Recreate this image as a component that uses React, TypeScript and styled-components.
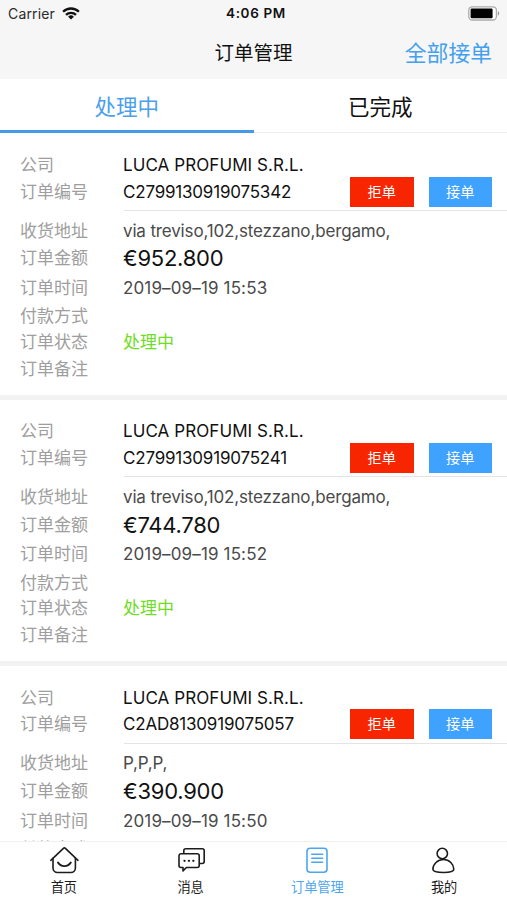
import React from 'react';
import styled, { createGlobalStyle } from 'styled-components';

const Global = createGlobalStyle`
  * { box-sizing: border-box; }
  body { margin: 0; background: #fff; }
`;

const Screen = styled.div`
  width: 507px;
  height: 900px;
  overflow: hidden;
  display: flex;
  flex-direction: column;
  background: #fff;
  color: #111;
  font-family: Inter, 'Noto Sans CJK SC', sans-serif;
  white-space: nowrap;
`;

const Header = styled.header`
  height: 79px;
  flex: none;
  background: #f6f6f6;
`;

const StatusBar = styled.div`
  height: 27px;
  padding: 0 7px 0 8px;
  display: grid;
  grid-template-columns: 1fr auto 1fr;
  align-items: center;
  font-size: 14px;
  line-height: 27px;
`;

const Carrier = styled.div`
  display: flex;
  align-items: center;
  gap: 7px;
  letter-spacing: 0.15px;
  color: #2a2a2a;
`;

const Clock = styled.div`
  font-size: 13.5px;
  font-weight: 600;
  letter-spacing: 0.65px;
  padding: 0 0 0 4px;
`;

const BatterySlot = styled.div`
  display: flex;
  justify-content: flex-end;
`;

const NavBar = styled.div`
  height: 52px;
  padding: 0 15px;
  display: grid;
  grid-template-columns: 1fr auto 1fr;
  align-items: center;
`;

const Title = styled.h1`
  grid-column: 2;
  margin: 0;
  font-size: 19.5px;
  line-height: 28px;
  font-weight: 400;
`;

const AcceptAll = styled.a`
  justify-self: end;
  font-size: 21.8px;
  line-height: 30px;
  color: #42a0ee;
`;

const Tabs = styled.nav`
  display: flex;
  flex: none;
  height: 54px;
`;

const Tab = styled.div<{ $active?: boolean }>`
  flex: 1;
  height: 54px;
  padding-top: 12px;
  text-align: center;
  font-size: 21.5px;
  line-height: 32px;
  color: ${(p) => (p.$active ? '#4aa0ec' : '#111')};
  border-bottom: ${(p) => (p.$active ? '3px solid #4499e8' : '1px solid #eee')};
`;

const List = styled.main`
  flex: 1;
  min-height: 0;
  overflow: hidden;
`;

const Card = styled.section`
  height: 266.3px;
  padding-top: 18px;
  border-bottom: 5px solid #f2f2f2;

  &:first-child {
    height: 267.1px;
    padding-top: 18.8px;
  }
`;

const Row = styled.div<{ $h?: number }>`
  display: flex;
  align-items: center;
  height: ${(p) => p.$h ?? 26.6}px;
  padding-left: 20px;
`;

const Label = styled.span`
  width: 103px;
  font-size: 17px;
  line-height: 26px;
  color: #9e9e9e;
`;

const Value = styled.span<{ $color?: string; $size?: number; $spacing?: number }>`
  font-size: ${(p) => p.$size ?? 17}px;
  letter-spacing: ${(p) => p.$spacing ?? 0}px;
  line-height: 26px;
  color: ${(p) => p.$color ?? '#4a4a4a'};
`;

const Actions = styled.div`
  display: flex;
  gap: 15px;
  margin-left: auto;
  margin-right: 15px;
`;

const Action = styled.button<{ $bg: string }>`
  width: 63.5px;
  height: 30px;
  padding: 0;
  border: 0;
  background: ${(p) => p.$bg};
  color: #fff;
  font-family: inherit;
  font-size: 14.2px;
  line-height: 30px;
`;

const Divider = styled.div`
  height: 1px;
  margin: 5px 0 6.6px 124px;
  background: #e4e4e4;
`;

const TabBar = styled.footer`
  flex: none;
  height: 59px;
  display: flex;
  border-top: 1px solid #f0f0f0;
  background: #fff;
`;

const TabItem = styled.div<{ $active?: boolean }>`
  flex: 1;
  display: flex;
  flex-direction: column;
  align-items: center;
  padding: 4px 0 0 1px;
  font-size: 13.2px;
  line-height: 20px;
  color: ${(p) => (p.$active ? '#4da5f0' : '#1c1c1c')};
`;

const TabIcon = styled.svg`
  display: block;
  width: 32px;
  height: 30px;
  margin-bottom: 1px;
  fill: none;
  stroke: currentColor;
  stroke-width: 1.6;
  stroke-linecap: round;
  stroke-linejoin: round;
`;

const Wifi = () => (
  <svg width="18" height="13" viewBox="0 0 18 13" fill="none" stroke="#111" strokeWidth="2.3">
    <path d="M1.1 4.7a11.3 11.3 0 0 1 15.8 0" />
    <path d="M4 7.9a7.1 7.1 0 0 1 10 0" />
    <path d="M9 12.6 6.1 9.7a4.2 4.2 0 0 1 5.8 0Z" fill="#111" stroke="none" />
  </svg>
);

const Battery = () => (
  <svg width="32" height="15" viewBox="0 0 32 15">
    <rect x="0.8" y="0.8" width="27.6" height="13.2" rx="3.5" fill="#fff" stroke="#aaa" strokeWidth="1.3" />
    <rect x="2.6" y="2.6" width="22" height="9.6" rx="1.2" fill="#000" />
    <path d="M29.9 5.2c1.7.6 1.7 3.8 0 4.4Z" fill="#999" />
  </svg>
);

interface Order {
  id: string;
  address: string;
  amount: string;
  time: string;
}

const orders: Order[] = [
  { id: 'C2799130919075342', address: 'via treviso,102,stezzano,bergamo,', amount: '€952.800', time: '2019–09–19 15:53' },
  { id: 'C2799130919075241', address: 'via treviso,102,stezzano,bergamo,', amount: '€744.780', time: '2019–09–19 15:52' },
  { id: 'C2AD8130919075057', address: 'P,P,P,', amount: '€390.900', time: '2019–09–19 15:50' },
];

const OrderCard = ({ order }: { order: Order }) => (
  <Card>
    <Row><Label>公司</Label><Value $color="#111" $spacing={0.08}>LUCA PROFUMI S.R.L.</Value></Row>
    <Row>
      <Label>订单编号</Label>
      <Value $color="#111" $spacing={-0.2}>{order.id}</Value>
      <Actions>
        <Action $bg="#f72600">拒单</Action>
        <Action $bg="#3fa2ff">接单</Action>
      </Actions>
    </Row>
    <Divider />
    <Row><Label>收货地址</Label><Value $spacing={-0.15}>{order.address}</Value></Row>
    <Row $h={28.5}><Label>订单金额</Label><Value $color="#111" $size={22} $spacing={-0.25}>{order.amount}</Value></Row>
    <Row $h={31}><Label>订单时间</Label><Value $spacing={0.14}>{order.time}</Value></Row>
    <Row $h={25.2}><Label>付款方式</Label></Row>
    <Row><Label>订单状态</Label><Value $color="#6fdc26">处理中</Value></Row>
    <Row><Label>订单备注</Label></Row>
  </Card>
);

export default function App() {
  return (
    <>
      <Global />
      <Screen>
        <Header>
          <StatusBar>
            <Carrier>Carrier<Wifi /></Carrier>
            <Clock>4:06 PM</Clock>
            <BatterySlot><Battery /></BatterySlot>
          </StatusBar>
          <NavBar>
            <Title>订单管理</Title>
            <AcceptAll>全部接单</AcceptAll>
          </NavBar>
        </Header>
        <Tabs>
          <Tab $active>处理中</Tab>
          <Tab>已完成</Tab>
        </Tabs>
        <List>
          {orders.map((o) => <OrderCard key={o.id} order={o} />)}
        </List>
        <TabBar>
          <TabItem>
            <TabIcon viewBox="0 0 32 30">
              <path d="M2.8 14.3 15.400 2.300q1-.9 2 0L30 14.300" />
              <path d="M5 12.2V22a4.500 4.500 0 0 0 4.500 4.500h13.400a4.500 4.500 0 0 0 4.500-4.500v-9.800" />
              <path d="M10 16.500c2.800 4.800 10 4.800 12.800 0" strokeWidth="1.9" />
            </TabIcon>
            首页
          </TabItem>
          <TabItem>
            <TabIcon viewBox="0 0 32 30">
              <path d="M8.800 7.300V4.800a2 2 0 0 1 2-2h16.400a2 2 0 0 1 2 2v10.700a2 2 0 0 1-2 2h-2" />
              <path d="M6 7.800h16.200a2 2 0 0 1 2 2v9.700a2 2 0 0 1-2 2H11.400l-3.400 3.400v-3.400H6a2 2 0 0 1-2-2V9.800a2 2 0 0 1 2-2Z" />
              <path d="M9.500 14.800h.1M13.900 14.800h.1M18.300 14.800h.1" strokeWidth="2.300" />
            </TabIcon>
            消息
          </TabItem>
          <TabItem $active>
            <TabIcon viewBox="0 0 32 30">
              <rect x="6" y="2.2" width="20" height="24" rx="3.2" />
              <path d="M10.800 8.300h10.800M10.800 12.300h10.800M10.800 16.300h10.800" />
            </TabIcon>
            订单管理
          </TabItem>
          <TabItem>
            <TabIcon viewBox="0 0 32 30">
              <circle cx="14.3" cy="7.5" r="5.200" />
              <path d="M15.500 13.500c5.900 0 10.300 4.800 10.300 9.800 0 2.100-2 3.200-10.300 3.200S4.900 25.400 4.900 23.300c0-5 4.700-9.800 10.600-9.800Z" />
            </TabIcon>
            我的
          </TabItem>
        </TabBar>
      </Screen>
    </>
  );
}
